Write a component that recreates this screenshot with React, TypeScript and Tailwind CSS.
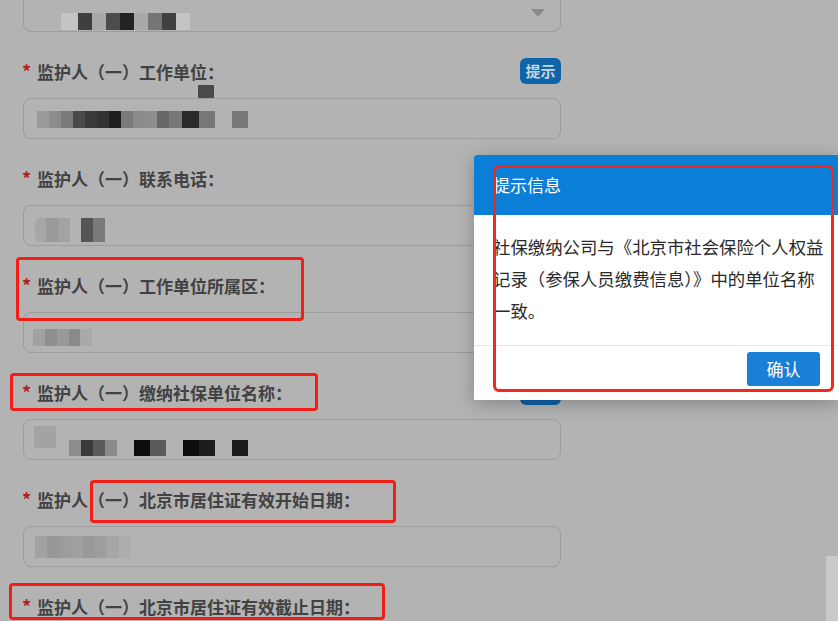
import React from 'react';

const font = { fontFamily: '"Noto Sans CJK SC", "Noto Sans", sans-serif' };

// pixelated (masked) blocks of input content
const Blocks: React.FC<{ items: string[]; className?: string }> = ({ items, className }) => (
  <div className={'flex ' + (className || '')}>
    {items.map((c, i) => (
      <div key={i} className={c}></div>
    ))}
  </div>
);

const Label: React.FC<{ text: string; badge?: boolean }> = ({ text, badge }) => (
  <div className="mt-[27px] mb-[15px] h-[24px] flex items-center justify-between">
    <div className="flex items-center text-[17px] font-bold text-[#424242] leading-none">
      <span className="text-[#b3211c] w-[15px] -ml-[1px] text-[18px]">*</span>
      <span>{text}</span>
    </div>
    {badge && (
      <span className="h-[26px] w-[41px] rounded-[6px] bg-[#0f63a8] text-[#c7d2dc] text-[15px] font-bold flex items-center justify-center">
        提示
      </span>
    )}
  </div>
);

const Input: React.FC<{ children?: React.ReactNode; select?: boolean; className?: string }> = ({ children, select, className }) => (
  <div className={'relative h-[41px] rounded-[8px] border border-[#9c9c9c] flex items-center px-[10px] ' + (className || '')}>
    {children}
    {select && (
      <div className="absolute right-[15px] top-[18px] w-0 h-0 border-l-[7px] border-r-[7px] border-t-[8px] border-l-transparent border-r-transparent border-t-[#8a8a8a]"></div>
    )}
  </div>
);

export default function App() {
  return (
    <div className="relative w-[838px] h-[621px] overflow-hidden bg-[#b3b3b3]" style={font}>
      {/* form */}
      <div className="w-[538px] ml-[23px]">
        <Input select className="-mt-[10px] h-[42px]">
          <Blocks
            className="mt-[20px] ml-[27px] h-[17px] bg-[#c4c4c4] pl-[17px] pr-[14px]"
            items={[
              'w-[14px] bg-[#3f3f3f]',
              'w-[14px] bg-[#a9a9a9]',
              'w-[14px] bg-[#4c4c4c]',
              'w-[14px] bg-[#222222]',
              'w-[14px] bg-[#a9a9a9]',
              'w-[14px] bg-[#757575]',
              'w-[14px] bg-[#404040]',
            ]}
          />
        </Input>

        <Label text="监护人（一）工作单位：" badge />
        <Input>
          <Blocks
            className="ml-[3px] h-[17px] mt-[2px]"
            items={[
              'w-[12px] bg-[#9a9a9a]',
              'w-[12px] bg-[#8c8c8c]',
              'w-[12px] bg-[#7a7a7a]',
              'w-[12px] bg-[#4a4a4a]',
              'w-[12px] bg-[#3a3a3a]',
              'w-[12px] bg-[#333333]',
              'w-[12px] bg-[#1e1e1e]',
              'w-[12px] bg-[#7a7a7a]',
              'w-[12px] bg-[#8a8a8a]',
              'w-[12px] bg-[#8e8e8e]',
              'w-[12px] bg-[#666666]',
              'w-[13px] bg-[#777777]',
              'w-[17px] bg-[#2a2a2a]',
              'w-[16px] bg-[#777777]',
              'w-[17px] bg-transparent',
              'w-[16px] bg-[#777777]',
            ]}
          />
          <div className="absolute left-[174px] -top-[14px] w-[16px] h-[13px] bg-[#4a4a4a]"></div>
        </Input>

        <Label text="监护人（一）联系电话：" />
        <Input>
          <Blocks
            className="ml-[1px] h-[24px] mt-[8px]"
            items={[
              'w-[11px] bg-[#a6a6a6] rounded-l-[6px]',
              'w-[12px] bg-[#999999]',
              'w-[12px] bg-[#a3a3a3]',
              'w-[11px] bg-transparent',
              'w-[12px] bg-[#555555]',
              'w-[12px] bg-[#7a7a7a]',
            ]}
          />
        </Input>

        <Label text="监护人（一）工作单位所属区：" />
        <Input>
          <Blocks
            className="ml-[-1px] h-[17px] mt-[10px]"
            items={[
              'w-[12px] bg-[#a1a1a1]',
              'w-[12px] bg-[#8e8e8e]',
              'w-[12px] bg-[#9a9a9a]',
              'w-[11px] bg-[#8a8a8a]',
              'w-[12px] bg-[#a9a9a9]',
            ]}
          />
        </Input>

        <Label text="监护人（一）缴纳社保单位名称：" badge />
        <Input>
          <div className="relative w-full h-full">
            <div className="absolute left-[0px] top-[6px] w-[22px] h-[22px] bg-[#a3a3a3]"></div>
            <Blocks
              className="absolute left-[35px] top-[20px] h-[16px]"
              items={[
                'w-[12px] bg-[#8c8c8c]',
                'w-[12px] bg-[#3a3a3a]',
                'w-[12px] bg-[#5a5a5a]',
                'w-[12px] bg-[#8a8a8a]',
                'w-[17px] bg-transparent',
                'w-[16px] bg-[#0d0d0d]',
                'w-[16px] bg-[#5a5a5a]',
                'w-[17px] bg-transparent',
                'w-[16px] bg-[#0d0d0d]',
                'w-[16px] bg-[#1c1c1c]',
                'w-[17px] bg-transparent',
                'w-[16px] bg-[#1a1a1a]',
              ]}
            />
          </div>
        </Input>

        <Label text="监护人（一）北京市居住证有效开始日期：" />
        <Input>
          <Blocks
            className="ml-[1px] h-[22px]"
            items={[
              'w-[12px] bg-[#a2a2a2]',
              'w-[12px] bg-[#989898]',
              'w-[12px] bg-[#9c9c9c]',
              'w-[12px] bg-[#a0a0a0]',
              'w-[12px] bg-[#999999]',
              'w-[12px] bg-[#9e9e9e]',
              'w-[12px] bg-[#a6a6a6]',
              'w-[11px] bg-[#adadad]',
            ]}
          />
        </Input>

        <Label text="监护人（一）北京市居住证有效截止日期：" />
      </div>

      {/* light strip at bottom right */}
      <div className="absolute left-[826px] top-[556px] w-[12px] h-[65px] bg-[#c9c9c9]"></div>

      {/* dialog */}
      <div className="absolute left-[474px] top-[155px] w-[364px] h-[245px] bg-white rounded-tl-[3px] shadow-[0_4px_18px_rgba(0,0,0,0.25)] flex flex-col">
        <div className="h-[60px] bg-[#0b7fd8] rounded-tl-[3px] flex items-center pl-[19px] text-white text-[17px]">
          提示信息
        </div>
        <div className="h-[130px] pl-[19px] pr-[6px] pt-[16px] text-[17.4px] leading-[32px] text-[#2a2a2a]">
          社保缴纳公司与《北京市社会保险个人权益<br />记录（参保人员缴费信息）》中的单位名称<br />一致。
        </div>
        <div className="border-t border-[#e6e6e6] flex-1 flex items-start justify-end pr-[18px] pt-[6px]">
          <button className="w-[73px] h-[34px] rounded-[3px] bg-[#1a7fd6] text-white text-[17px]">确认</button>
        </div>
      </div>

      {/* red annotation boxes */}
      <div className="absolute left-[493px] top-[165px] w-[341px] h-[227px] border-[3px] border-[#ee2a1e] rounded-[6px]"></div>
      <div className="absolute left-[16px] top-[257px] w-[288px] h-[64px] border-[3px] border-[#f21d16] rounded-[4px]"></div>
      <div className="absolute left-[10px] top-[373px] w-[308px] h-[38px] border-[3px] border-[#f21d16] rounded-[4px]"></div>
      <div className="absolute left-[90px] top-[480px] w-[306px] h-[43px] border-[3px] border-[#f21d16] rounded-[4px]"></div>
      <div className="absolute left-[9px] top-[583px] w-[376px] h-[37px] border-[3px] border-[#f21d16] rounded-[4px]"></div>
    </div>
  );
}
